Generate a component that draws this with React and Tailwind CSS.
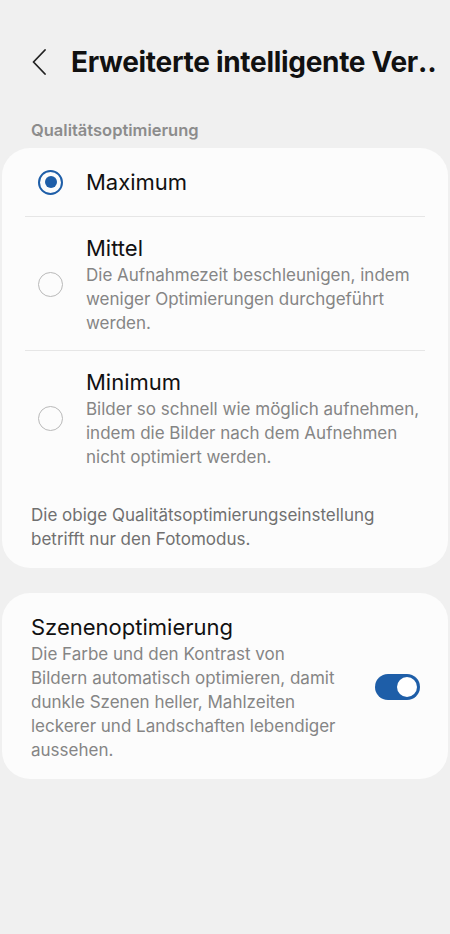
const Radio = ({ checked }) => (
  <div className="w-[25px] h-[25px] shrink-0 ml-[13px]">
    {checked ? (
      <div className="w-[25px] h-[25px] rounded-full border-[2.5px] border-[#1e5ea8] flex items-center justify-center">
        <div className="w-[12px] h-[12px] rounded-full bg-[#1e5ea8]" />
      </div>
    ) : (
      <div className="w-[25px] h-[25px] rounded-full border-[1.5px] border-[#b9b9b9]" />
    )}
  </div>
);

const Option = ({ title, lines, checked, py }) => (
  <div className={`flex items-center ${py}`}>
    <Radio checked={checked} />
    <div className="flex-1 pl-[23px]">
      <div className="text-[22px] leading-[30px] text-[#111]">{title}</div>
      {lines && (
        <div className="text-[17px] leading-[24px] text-[#858585]">
          {lines.map((l, i) => (
            <div key={i}>{l}</div>
          ))}
        </div>
      )}
    </div>
  </div>
);

export default function App() {
  return (
    <div className="min-h-[934px] bg-[#f0f0f0] pb-10" style={{ fontFamily: 'Inter, "Noto Sans", sans-serif' }}>
      {/* header */}
      <div className="flex items-center pt-[44px] pl-[32px] h-[80px]">
        <svg width="14" height="26" viewBox="0 0 14 26" fill="none" className="shrink-0">
          <polyline points="13,1 1.5,13 13,25" stroke="#222" strokeWidth="1.8" strokeLinecap="round" strokeLinejoin="round" />
        </svg>
        <h1 className="ml-[25px] text-[28px] font-bold text-[#111] whitespace-nowrap tracking-[-0.3px] overflow-hidden">
          Erweiterte intelligente Ver‥
        </h1>
      </div>

      <div className="mt-[40px] px-[31px] text-[16.5px] font-semibold text-[#8c8c8c] leading-[20px]">
        Qualitätsoptimierung
      </div>

      {/* quality card */}
      <div className="mt-[8px] mx-[2px] bg-[#fcfcfc] rounded-[28px] px-[23px] pb-[17px]">
        <Option title="Maximum" checked py="py-[19px]" />
        <div className="h-px bg-[#e6e6e6]" />
        <Option
          title="Mittel"
          py="pt-[16px] pb-[15px]"
          lines={['Die Aufnahmezeit beschleunigen, indem', 'weniger Optimierungen durchgeführt', 'werden.']}
        />
        <div className="h-px bg-[#e6e6e6]" />
        <Option
          title="Minimum"
          py="pt-[16px] pb-[15px]"
          lines={['Bilder so schnell wie möglich aufnehmen,', 'indem die Bilder nach dem Aufnehmen', 'nicht optimiert werden.']}
        />
        <p className="mt-[19px] px-[6px] text-[17px] leading-[24px] text-[#707070]">
          Die obige Qualitätsoptimierungseinstellung
          <br />
          betrifft nur den Fotomodus.
        </p>
      </div>

      {/* scene card */}
      <div className="mt-[25px] mx-[2px] bg-[#fcfcfc] rounded-[28px] pl-[29px] pr-[28px] pt-[19px] pb-[17px] flex items-center">
        <div className="flex-1">
          <div className="text-[22px] leading-[30px] text-[#111]">Szenenoptimierung</div>
          <div className="text-[17px] leading-[24px] text-[#858585]">
            Die Farbe und den Kontrast von
            <br />
            Bildern automatisch optimieren, damit
            <br />
            dunkle Szenen heller, Mahlzeiten
            <br />
            leckerer und Landschaften lebendiger
            <br />
            aussehen.
          </div>
        </div>
        <div className="w-[45px] h-[26px] rounded-full bg-[#1e5ea8] flex items-center justify-end pr-[3px] shrink-0">
          <div className="w-[20px] h-[20px] rounded-full bg-white" />
        </div>
      </div>
    </div>
  );
}
